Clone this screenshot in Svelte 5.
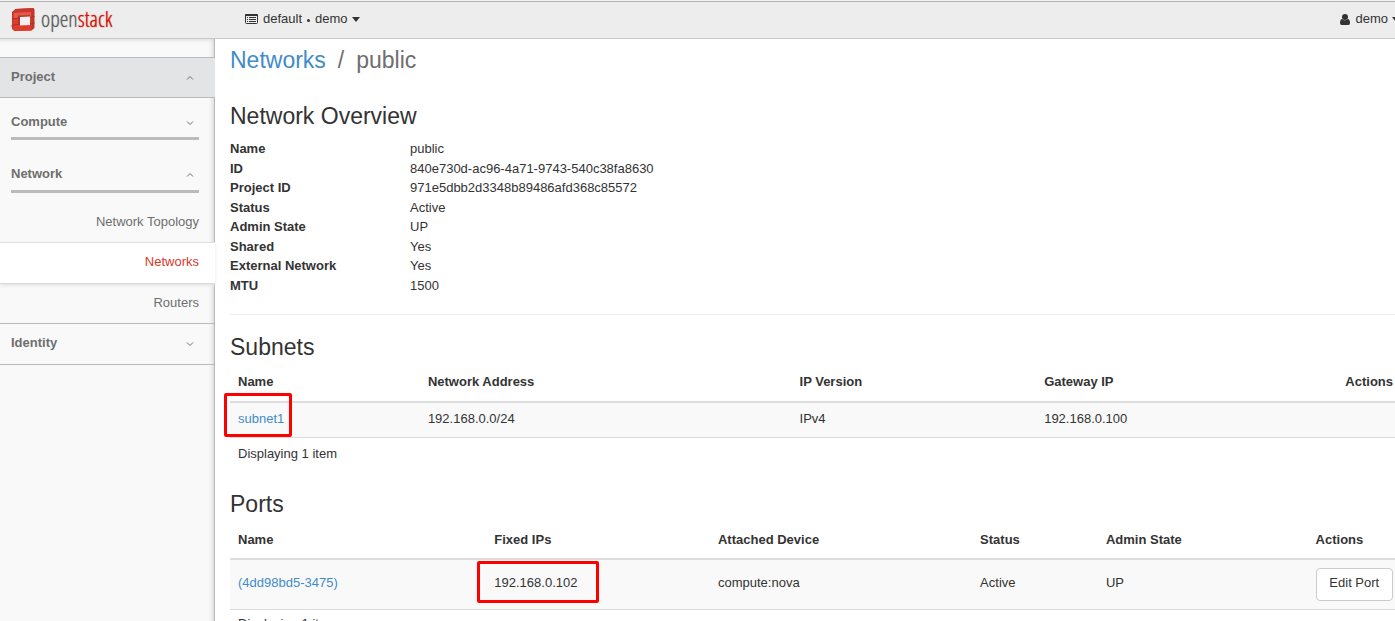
<script>
  const overview = [
    ['Name', 'public'],
    ['ID', '840e730d-ac96-4a71-9743-540c38fa8630'],
    ['Project ID', '971e5dbb2d3348b89486afd368c85572'],
    ['Status', 'Active'],
    ['Admin State', 'UP'],
    ['Shared', 'Yes'],
    ['External Network', 'Yes'],
    ['MTU', '1500'],
  ];
  const subnets = [{ name: 'subnet1', address: '192.168.0.0/24', version: 'IPv4', gateway: '192.168.0.100' }];
  const ports = [
    { name: '(4dd98bd5-3475)', ip: '192.168.0.102', device: 'compute:nova', status: 'Active', admin: 'UP' },
  ];
</script>

{#snippet chevron(up)}
  <svg class="chevron" viewBox="0 0 8 6" aria-hidden="true">
    <path d={up ? 'M1 4.5 4 1.5 7 4.5' : 'M1 1.5 4 4.5 7 1.5'} />
  </svg>
{/snippet}

<div class="page">
  <header class="topbar">
    <a class="brand" href="#home" aria-label="openstack">
      <svg class="mark" viewBox="0 0 26 24" aria-hidden="true">
        <path d="M0 18 4 15v6z" fill="#b5b5b5" />
        <path d="M2 4 5.5 1 23.5 0 24.500 1.500V20L21.500 22.500 4.500 23 2 21z" fill="#c4352a" />
        <path d="M3 4.500 21 3.500 21.500 22.500 4.500 23 3 21z" fill="#de3d2e" />
        <path d="M3 4.500 5.500 1 23.500 0 21 3.500z" fill="#c9382c" />
        <path d="M4 5 21 4 21 8.500 4 10z" fill="#e5594b" />
        <path d="M8.500 8 20 7.500V17L8.500 17.500z" fill="#f2f0f0" />
        <path d="M8 7.500 20 7V8.500L10 9V17.500L8 18z" fill="#b5332a" />
        <path d="M2.500 11 8 10.500M2.500 17 8 16.500M20 9.500 24.500 8.500M20 16 24.500 15" stroke="#b03026" stroke-width="1" />
      </svg>
      <span class="word">open<span class="red">stack</span></span>
    </a>
    <button class="menu" type="button">
      <svg class="list" viewBox="0 0 13 10" aria-hidden="true">
        <rect x="0.5" y="0.5" width="12" height="9" rx="1" fill="none" stroke="#333" />
        <path d="M0 1Q0 0 1 0H12Q13 0 13 1V2H0z" fill="#333" />
        <path d="M2 3.5H3M4 3.5H11M2 5.500H3M4 5.500H11M2 7.500H3M4 7.500H11" stroke="#333" />
      </svg>
      <span>default</span><i class="dot"></i><span>demo</span><i class="caret"></i>
    </button>
    <button class="menu user" type="button">
      <svg class="person" viewBox="0 0 10 11" aria-hidden="true">
        <circle cx="5" cy="3" r="3" fill="#333" />
        <path d="M2.2 5Q5 7.500 7.800 5Q10 5.300 10 9Q10 11 8.300 11H1.700Q0 11 0 9Q0 5.300 2.200 5z" fill="#333" />
      </svg>
      <span>demo</span><i class="caret"></i>
    </button>
  </header>

  <div class="body">
    <nav class="sidebar" aria-label="Dashboard">
      <button class="section open" type="button">Project {@render chevron(true)}</button>
      <button class="group" type="button">Compute {@render chevron(false)}</button>
      <button class="group second" type="button">Network {@render chevron(true)}</button>
      <a class="item" href="#topology">Network Topology</a>
      <a class="item active" href="#networks">Networks</a>
      <a class="item last" href="#routers">Routers</a>
      <button class="section" type="button">Identity {@render chevron(false)}</button>
    </nav>

    <main>
      <h1><a href="#networks">Networks</a><span class="slash">/</span><span>public</span></h1>

      <h2>Network Overview</h2>
      <dl>
        {#each overview as [term, value]}
          <dt>{term}</dt>
          <dd>{value}</dd>
        {/each}
      </dl>
      <hr />

      <h2>Subnets</h2>
      <table class="subnets">
        <thead>
          <tr><th>Name</th><th>Network Address</th><th>IP Version</th><th>Gateway IP</th><th class="end">Actions</th></tr>
        </thead>
        <tbody>
          {#each subnets as s}
            <tr>
              <td class="marked"><a href="#subnet">{s.name}</a><span class="mark-box subnet-box"></span></td>
              <td>{s.address}</td><td>{s.version}</td><td>{s.gateway}</td><td></td>
            </tr>
          {/each}
        </tbody>
      </table>
      <p class="count">Displaying 1 item</p>

      <h2 class="ports-title">Ports</h2>
      <table class="ports">
        <thead>
          <tr><th>Name</th><th>Fixed IPs</th><th>Attached Device</th><th>Status</th><th>Admin State</th><th>Actions</th></tr>
        </thead>
        <tbody>
          {#each ports as p}
            <tr>
              <td><a href="#port">{p.name}</a></td>
              <td class="marked">{p.ip}<span class="mark-box ip-box"></span></td>
              <td>{p.device}</td><td>{p.status}</td><td>{p.admin}</td>
              <td class="act"><button class="edit" type="button">Edit Port</button></td>
            </tr>
          {/each}
        </tbody>
      </table>
      <p class="count">Displaying 1 item</p>
    </main>
  </div>
</div>

<style>
  :global(body) {
    margin: 0;
    overflow: hidden;
  }
  .page {
    display: flex;
    flex-direction: column;
    height: 100vh;
    overflow: hidden;
    background: #fff;
    color: #333;
    font: 13px/1.5 "Liberation Sans", Arial, sans-serif;
  }
  .page * {
    box-sizing: border-box;
  }
  a {
    color: #428bca;
    text-decoration: none;
  }
  button {
    margin: 0;
    border: 0;
    background: none;
    color: inherit;
    font: inherit;
    cursor: pointer;
  }

  .topbar {
    display: flex;
    align-items: center;
    flex: none;
    height: 38px;
    margin-top: 1px;
    border-top: 1px solid #b3b3b3;
    border-bottom: 1px solid #c8c8c8;
    background: #ededed;
    overflow: hidden;
    box-shadow: 0 -1px #f2f2f2;
  }
  .brand {
    display: flex;
    align-items: center;
    flex: none;
    gap: 5px;
    width: 245px;
    padding-left: 10px;
  }
  .mark {
    width: 26px;
    height: 24px;
  }
  .word {
    padding-bottom: 4px;
    color: #5c5d60;
    font: 300 22px/24px "Open Sans Condensed Light", "Open Sans Condensed", "Liberation Sans Narrow", "Liberation Sans", sans-serif;
    text-shadow: 0 0 1px #8c8d90;
  }
  .red {
    color: #d3150c;
    text-shadow: 0 0 1px #d3150c;
  }
  .menu {
    display: flex;
    align-items: center;
    flex: none;
    padding: 0 0 2px;
  }
  .user {
    margin: 0 -5px 0 auto;
  }
  .list {
    width: 13px;
    height: 10px;
    margin-right: 5px;
  }
  .person {
    width: 10px;
    height: 11px;
    margin-right: 5px;
  }
  .dot {
    width: 3px;
    height: 3px;
    margin: 3px 5px 0;
    border-radius: 50%;
    background: #333;
  }
  .caret {
    margin-left: 4px;
    border: 4px solid transparent;
    border-top: 5px solid #333;
    border-bottom: 0;
  }

  .body {
    display: flex;
    flex: 1;
    min-height: 0;
  }
  .sidebar {
    display: flex;
    flex-direction: column;
    flex: none;
    width: 215px;
    padding-top: 18px;
    border-right: 1px solid #b9b9b9;
    background: #f9f9f9;
    box-shadow: inset -4px 3px 5px -3px #d0d0d0;
    color: #6e6e6e;
  }
  .section,
  .group {
    display: flex;
    align-items: center;
    justify-content: space-between;
    flex: none;
    font-weight: bold;
  }
  .section {
    height: 42px;
    margin-right: -1px;
    padding: 0 21px 3px 11px;
    border-top: 1px solid #b9b9b9;
    border-bottom: 1px solid #b9b9b9;
  }
  .section.open {
    height: 41px;
    padding-bottom: 1px;
    background: #e2e4e6;
  }
  .group {
    height: 42px;
    margin: 0 15px 0 11px;
    padding: 8px 5px 0 0;
    border-bottom: 3px solid #bbb;
  }
  .group.second {
    height: 53px;
    padding-top: 18px;
  }
  .chevron {
    width: 8px;
    height: 6px;
    margin-top: 2px;
    fill: none;
    stroke: #6e6e6e;
  }
  .item {
    flex: none;
    height: 40px;
    padding: 9px 15px 0 0;
    color: #6e6e6e;
    text-align: right;
  }
  .item.last {
    height: 39px;
  }
  .group + .item {
    height: 49px;
    padding-top: 19px;
  }
  .item.active {
    height: 42px;
    margin-right: -1px;
    padding-right: 16px;
    border-top: 1px solid #e0e0e0;
    border-bottom: 1px solid #d8d8d8;
    background: #fff;
    color: #d9392b;
    box-shadow: 0 2px 3px #e6e6e6;
  }

  main {
    flex: 1;
    min-width: 0;
    padding: 8px 0 0 15px;
  }
  h1,
  h2 {
    margin: 0;
    font-size: 23px;
    font-weight: normal;
    line-height: 26px;
  }
  h1 {
    margin-bottom: 30px;
    color: #6e6e6e;
  }
  .slash {
    margin: 0 12px;
  }
  dl {
    display: grid;
    grid-template-columns: 180px 1fr;
    margin: 10px 0 19px;
  }
  dt {
    font-weight: bold;
  }
  dd {
    margin: 0;
  }
  hr {
    height: 1px;
    margin: 0 0 19px;
    border: 0;
    background: #eee;
  }
  table {
    width: 100%;
    margin-top: 4px;
    border-collapse: separate;
    border-spacing: 0;
    table-layout: fixed;
    line-height: 19px;
  }
  th {
    padding: 8px 0 10px 8px;
    border-bottom: 2px solid #ddd;
    text-align: left;
  }
  .end {
    padding-right: 2px;
    text-align: right;
  }
  td {
    padding: 6px 0 9px 8px;
    border-bottom: 1px solid #ddd;
    background: #f9f9f9;
    vertical-align: top;
  }
  .subnets th:nth-child(1) { width: 16.3%; }
  .subnets th:nth-child(2) { width: 31.9%; }
  .subnets th:nth-child(3) { width: 21%; }
  .ports th:nth-child(1) { width: 22%; }
  .ports th:nth-child(2) { width: 19.2%; }
  .ports th:nth-child(3) { width: 22.5%; }
  .ports th:nth-child(4) { width: 10.8%; }
  .ports th:nth-child(5) { width: 18%; }
  .ports th {
    padding: 9px 0 9px 8px;
  }
  .ports td {
    padding-top: 13px;
  }
  .ports .act {
    padding: 8px 2px 8px 8px;
  }
  .edit {
    display: block;
    width: 100%;
    height: 33px;
    padding: 0 0 4px;
    border: 1px solid #ccc;
    border-radius: 4px;
    background: #fff;
    white-space: nowrap;
  }
  .marked {
    position: relative;
  }
  .mark-box {
    position: absolute;
    border: 3px solid #f00;
    border-radius: 2px;
    pointer-events: none;
  }
  .subnet-box {
    top: -10px;
    left: -6px;
    width: 68px;
    height: 44px;
  }
  .ip-box {
    top: 1px;
    left: -9px;
    width: 122px;
    height: 42px;
  }
  .count {
    margin: 0;
    padding: 6px 8px 0;
    line-height: 19px;
  }
  .ports + .count {
    padding-top: 4px;
  }
  .ports-title {
    margin-top: 28px;
  }
</style>
